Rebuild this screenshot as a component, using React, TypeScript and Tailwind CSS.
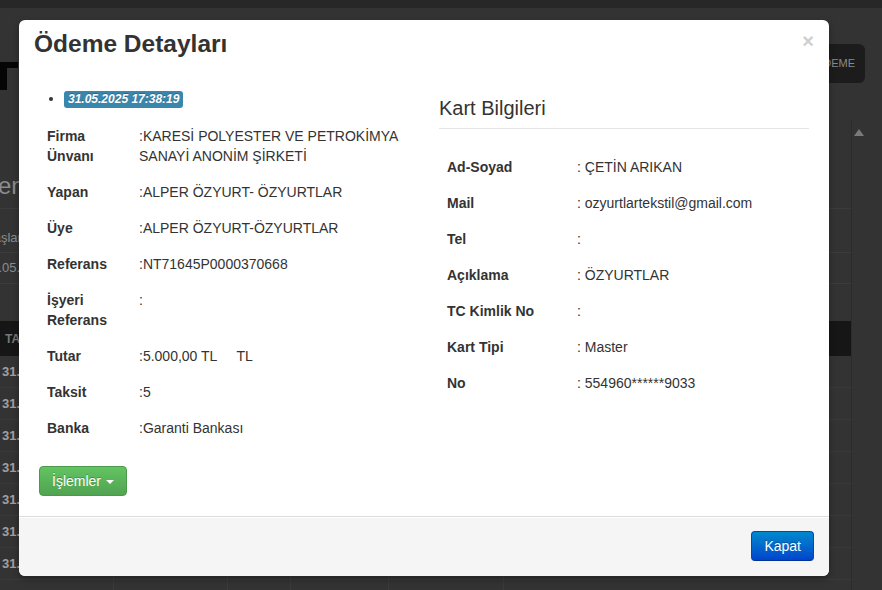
const leftRows: [string, string][] = [
  ['Firma Ünvanı', ':KARESİ POLYESTER VE PETROKİMYA SANAYİ ANONİM ŞİRKETİ'],
  ['Yapan', ':ALPER ÖZYURT- ÖZYURTLAR'],
  ['Üye', ':ALPER ÖZYURT-ÖZYURTLAR'],
  ['Referans', ':NT71645P0000370668'],
  ['İşyeri Referans', ':'],
  ['Tutar', ':5.000,00 TL\u00a0\u00a0\u00a0\u00a0 TL'],
  ['Taksit', ':5'],
  ['Banka', ':Garanti Bankası'],
];

const cardRows: [string, string][] = [
  ['Ad-Soyad', ': ÇETİN ARIKAN'],
  ['Mail', ': ozyurtlartekstil@gmail.com'],
  ['Tel', ':'],
  ['Açıklama', ': ÖZYURTLAR'],
  ['TC Kimlik No', ':'],
  ['Kart Tipi', ': Master'],
  ['No', ': 554960******9033'],
];

function BackgroundPage() {
  return (
    <div className="flex flex-col">
      <div className="h-[8px] bg-[#272727]" />
      <div className="flex h-[46px] items-start justify-between pt-[36px]">
        <svg width="18" height="28" viewBox="0 0 18 28" className="mt-[18px]">
          <rect x="0" y="0" width="18" height="6" fill="#050505" />
          <rect x="0" y="6" width="7" height="22" fill="#050505" />
        </svg>
        <div className="mr-[17px] flex h-[39px] items-center rounded-[6px] bg-[#1c1c1c] px-[10px] text-[11px] text-[#8a8a8a]">
          YENİ ÖDEME
        </div>
      </div>
      <div className="mt-[66px] flex">
        <div className="w-[851px]">
          <div className="mt-[51px] -ml-[2px] text-[24px] leading-[30px] text-[#8c8c8c]">enler Listesi</div>
          <div className="mt-[7px] border-t border-[#3b3b3b]" />
          <div className="-ml-[15px] h-[44px] border-b border-[#3b3b3b] pt-[21px] text-[13px] leading-[16px] text-[#8c8c8c]">
            Başlangıç Tarihi
          </div>
          <div className="-ml-[16px] flex h-[31px] items-center border-b border-[#3b3b3b] text-[13px] text-[#8c8c8c]">
            31.05.2025
          </div>
          <div className="mt-[37px] flex h-[35px] items-center bg-[#161616] pl-[5px] text-[12px] font-bold text-[#777]">
            TARİH
          </div>
          {[0, 1, 2, 3, 4, 5, 6, 7].map((i) => (
            <div key={i} className="flex h-[32px] items-center border-b border-[#3a3a3a] text-[13px] font-bold text-[#a0a0a0]">
              <div className="w-[113px] pl-[2px]">31.05.2025</div>
              <div className="h-full w-[114px] border-l border-[#3a3a3a]" />
              <div className="h-full w-[63px] border-l border-[#3a3a3a]" />
              <div className="h-full w-[98px] border-l border-[#3a3a3a]" />
              <div className="h-full w-[115px] border-l border-[#3a3a3a]" />
              <div className="h-full flex-1 border-l border-[#3a3a3a]" />
            </div>
          ))}
        </div>
        <div className="flex flex-1 justify-start border-l border-[#2c2c2c] pl-[2px] pt-[9px]">
          <svg width="10" height="7" viewBox="0 0 10 7">
            <path d="M5 0 L10 7 L0 7 Z" fill="#7a7a7a" />
          </svg>
        </div>
      </div>
    </div>
  );
}

function DetailTable({ rows, labelWidth }: { rows: [string, string][]; labelWidth: number }) {
  return (
    <table className="w-full table-fixed border-collapse text-[14px] leading-[20px] text-[#333]">
      <colgroup>
        <col style={{ width: labelWidth }} />
        <col />
      </colgroup>
      <tbody>
        {rows.map(([label, value]) => (
          <tr key={label}>
            <td className="p-[8px] align-top font-bold">{label}</td>
            <td className="p-[8px] align-top">{value}</td>
          </tr>
        ))}
      </tbody>
    </table>
  );
}

export default function App() {
  return (
    <div className="relative h-[590px] w-[882px] overflow-hidden bg-[#333] font-['Liberation_Sans',Arial,sans-serif]">
      <BackgroundPage />

      <div className="absolute left-[19px] top-[20px] w-[810px] overflow-hidden rounded-[6px] bg-white shadow-[0_3px_7px_rgba(0,0,0,0.3)]">
        <div className="flex items-start justify-between px-[15px] py-[9px]">
          <h3 className="text-[24.5px] font-bold leading-[30px] text-[#333]">Ödeme Detayları</h3>
          <span className="mt-[2px] text-[20px] font-bold leading-[20px] text-[#cfcfcf]">×</span>
        </div>

        <div className="flex gap-[20px] px-[15px] pb-[20px] pt-[21px]">
          <div className="w-[380px] px-[5px]">
            <div className="flex h-[20px] items-center pl-[10px]">
              <span className="h-[4px] w-[4px] rounded-full bg-[#333]" />
              <span className="ml-[11px] rounded-[3px] bg-[#3a87ad] px-[4px] text-[12px] font-bold italic leading-[17px] text-white [text-shadow:0_-1px_0_rgba(0,0,0,0.25)]">
                31.05.2025 17:38:19
              </span>
            </div>
            <div className="mt-[9px]">
              <DetailTable rows={leftRows} labelWidth={92} />
            </div>
            <button className="mt-[20px] flex items-center rounded-[4px] border border-[#4a9a4a] bg-gradient-to-b from-[#62c462] to-[#51a351] px-[12px] py-[4px] text-[14px] leading-[20px] text-white [text-shadow:0_-1px_0_rgba(0,0,0,0.25)]">
              İşlemler
              <span className="ml-[5px] mt-[2px] h-0 w-0 border-x-[4px] border-t-[4px] border-x-transparent border-t-white" />
            </button>
          </div>

          <div className="w-[380px] px-[5px] pt-[9px]">
            <div className="text-[20px] leading-[20px] text-[#333]">Kart Bilgileri</div>
            <div className="mb-[20px] mt-[10px] border-t border-[#e5e5e5]" />
            <DetailTable rows={cardRows} labelWidth={130} />
          </div>
        </div>

        <div className="flex justify-end border-t border-[#ddd] bg-[#f5f5f5] px-[15px] pb-[15px] pt-[14px] shadow-[inset_0_1px_0_#fff]">
          <button className="rounded-[4px] border border-[#0044cc] border-b-[#00339a] bg-gradient-to-b from-[#0088cc] to-[#0044cc] px-[12px] py-[4px] text-[14px] leading-[20px] text-white [text-shadow:0_-1px_0_rgba(0,0,0,0.25)]">
            Kapat
          </button>
        </div>
      </div>
    </div>
  );
}
